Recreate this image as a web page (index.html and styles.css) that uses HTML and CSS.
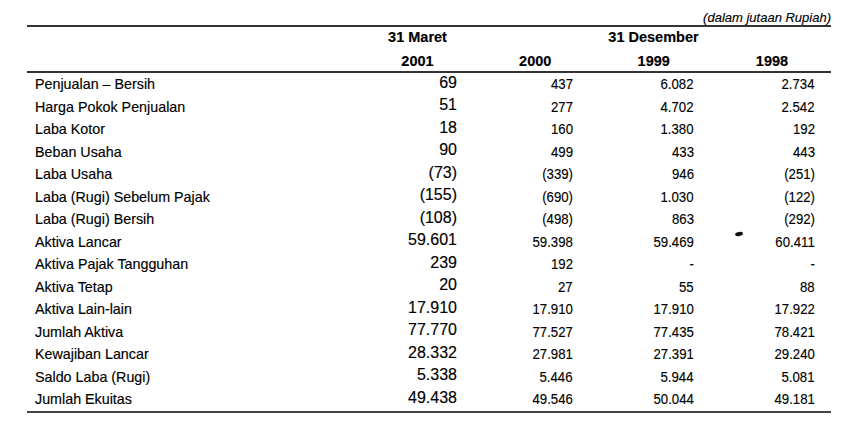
FILE: index.html
```html
<!DOCTYPE html>
<html lang="id">
<head>
<meta charset="utf-8">
<title>Ikhtisar Data Keuangan</title>
<link rel="stylesheet" href="styles.css">
</head>
<body>
<div class="note">(dalam jutaan Rupiah)</div>
<div class="fin">
  <div class="head">
    <div class="h c1">31 Maret</div>
    <div class="h span">31 Desember</div>
    <div class="lab"></div>
    <div class="h c1">2001</div>
    <div class="h c2">2000</div>
    <div class="h c3">1999</div>
    <div class="h c4">1998</div>
  </div>
  <div class="body">
    <div class="row"><div class="lab">Penjualan – Bersih</div><div class="v c1">69</div><div class="v c2"><span>437</span></div><div class="v c3"><span>6.082</span></div><div class="v c4"><span>2.734</span></div></div>
    <div class="row"><div class="lab">Harga Pokok Penjualan</div><div class="v c1">51</div><div class="v c2"><span>277</span></div><div class="v c3"><span>4.702</span></div><div class="v c4"><span>2.542</span></div></div>
    <div class="row"><div class="lab">Laba Kotor</div><div class="v c1">18</div><div class="v c2"><span>160</span></div><div class="v c3"><span>1.380</span></div><div class="v c4"><span>192</span></div></div>
    <div class="row"><div class="lab">Beban Usaha</div><div class="v c1">90</div><div class="v c2"><span>499</span></div><div class="v c3"><span>433</span></div><div class="v c4"><span>443</span></div></div>
    <div class="row"><div class="lab">Laba Usaha</div><div class="v c1">(73)</div><div class="v c2"><span>(339)</span></div><div class="v c3"><span>946</span></div><div class="v c4"><span>(251)</span></div></div>
    <div class="row"><div class="lab">Laba (Rugi) Sebelum Pajak</div><div class="v c1">(155)</div><div class="v c2"><span>(690)</span></div><div class="v c3"><span>1.030</span></div><div class="v c4"><span>(122)</span></div></div>
    <div class="row"><div class="lab">Laba (Rugi) Bersih</div><div class="v c1">(108)</div><div class="v c2"><span>(498)</span></div><div class="v c3"><span>863</span></div><div class="v c4"><span>(292)</span></div></div>
    <div class="row"><div class="lab">Aktiva Lancar</div><div class="v c1">59.601</div><div class="v c2"><span>59.398</span></div><div class="v c3"><span>59.469</span></div><div class="v c4"><span>60.411</span></div></div>
    <div class="row"><div class="lab">Aktiva Pajak Tangguhan</div><div class="v c1">239</div><div class="v c2"><span>192</span></div><div class="v c3"><span>-</span></div><div class="v c4"><span>-</span></div></div>
    <div class="row"><div class="lab">Aktiva Tetap</div><div class="v c1">20</div><div class="v c2"><span>27</span></div><div class="v c3"><span>55</span></div><div class="v c4"><span>88</span></div></div>
    <div class="row"><div class="lab">Aktiva Lain-lain</div><div class="v c1">17.910</div><div class="v c2"><span>17.910</span></div><div class="v c3"><span>17.910</span></div><div class="v c4"><span>17.922</span></div></div>
    <div class="row"><div class="lab">Jumlah Aktiva</div><div class="v c1">77.770</div><div class="v c2"><span>77.527</span></div><div class="v c3"><span>77.435</span></div><div class="v c4"><span>78.421</span></div></div>
    <div class="row"><div class="lab">Kewajiban Lancar</div><div class="v c1">28.332</div><div class="v c2"><span>27.981</span></div><div class="v c3"><span>27.391</span></div><div class="v c4"><span>29.240</span></div></div>
    <div class="row"><div class="lab">Saldo Laba (Rugi)</div><div class="v c1">5.338</div><div class="v c2"><span>5.446</span></div><div class="v c3"><span>5.944</span></div><div class="v c4"><span>5.081</span></div></div>
    <div class="row"><div class="lab">Jumlah Ekuitas</div><div class="v c1">49.438</div><div class="v c2"><span>49.546</span></div><div class="v c3"><span>50.044</span></div><div class="v c4"><span>49.181</span></div></div>
  </div>
  <span class="speck"></span>
</div>
</body>
</html>
```
FILE: styles.css
```css
html, body {
  margin: 0;
  padding: 0;
  background: #ffffff;
}
body {
  width: 848px;
  height: 429px;
  overflow: hidden;
  color: #000000;
  font-family: "Liberation Sans", Arial, sans-serif;
  -webkit-text-stroke: 0.15px #000000;
}
.note {
  padding: 10px 17px 0 0;
  height: 15px;
  line-height: 15px;
  font-size: 13px;
  font-style: italic;
  text-align: right;
}
.fin {
  position: relative;
  margin: 0 17px 0 27px;
  width: 804px;
  border-top: 2px solid #333333;
  border-bottom: 2px solid #444444;
}
.head, .row {
  display: grid;
  grid-template-columns: 332px 117px 118.5px 118.5px 118px;
}
.head {
  row-gap: 4px;
  border-bottom: 2px solid #333333;
}
.h {
  font-size: 14.5px;
  font-weight: bold;
  line-height: 20px;
  text-align: center;
}
.head .c1:first-child {
  grid-column: 2;
}
.span {
  grid-column: 3 / span 3;
}
.row {
  height: 22.5px;
}
.lab {
  padding-left: 8px;
  font-size: 14.3px;
  line-height: 22.5px;
  white-space: nowrap;
}
.v {
  text-align: right;
  font-size: 15px;
  line-height: 22.5px;
}
.v span {
  display: inline-block;
  transform: scaleX(0.88);
  transform-origin: right center;
}
.v.c1 {
  font-size: 16px;
  margin-top: -1.5px;
  padding-right: 19px;
}
.v.c2 { padding-right: 21.5px; }
.v.c3 { padding-right: 19px; }
.v.c4 { padding-right: 16px; }
.speck {
  position: absolute;
  left: 708px;
  top: 205px;
  width: 8px;
  height: 4px;
  border-radius: 50%;
  background: #111111;
  transform: rotate(-12deg);
}
```
